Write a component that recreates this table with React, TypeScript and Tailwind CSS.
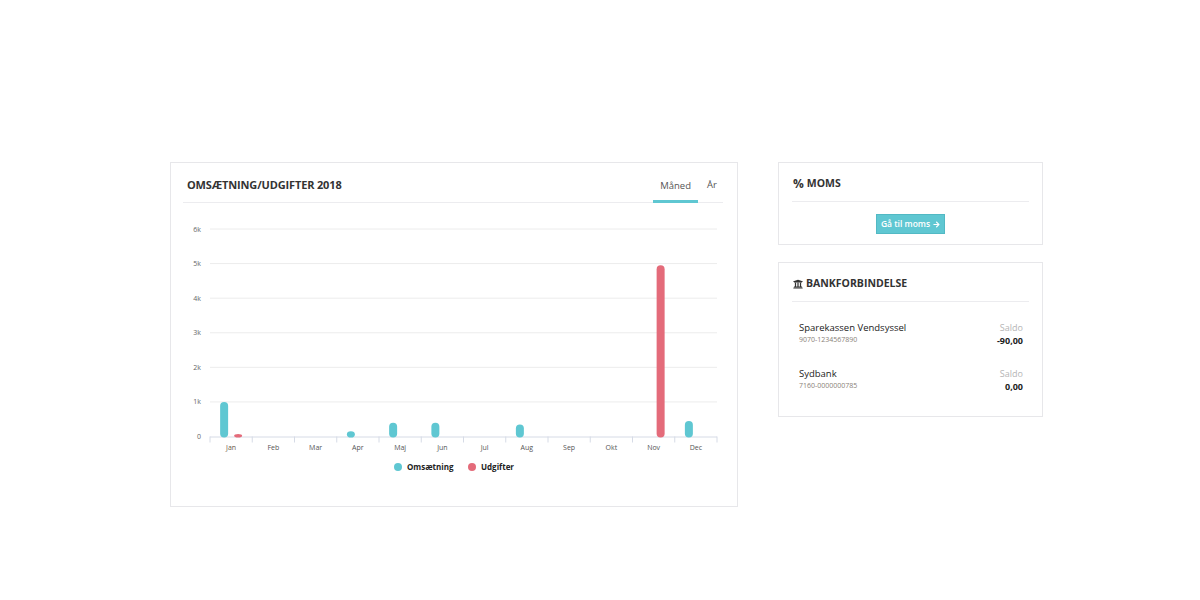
import React from 'react';
import { FaUniversity, FaArrowRight } from 'react-icons/fa';

const months = ['Jan', 'Feb', 'Mar', 'Apr', 'Maj', 'Jun', 'Jul', 'Aug', 'Sep', 'Okt', 'Nov', 'Dec'];
const revenue = [1000, 0, 0, 150, 400, 400, 0, 350, 0, 0, 0, 450];
const expenses = [50, 0, 0, 0, 0, 0, 0, 0, 0, 0, 4950, 0];

const TEAL = '#5fc7d2';
const RED = '#e46b7a';

// chart coordinates are relative to the svg
const X0 = 27;
const X1 = 534;
const BASE = 233.5;
const PER_K = 34.58;
const CAT = (X1 - X0) / 12;

const Bar: React.FC<{ cx: number; value: number; color: string }> = ({ cx, value, color }) => {
  if (!value) return null;
  const h = Math.max((value / 1000) * PER_K, 2.5);
  return <rect x={cx - 4} y={BASE - h} width={8} height={h + 1} rx={4} fill={color} />;
};

const Chart: React.FC = () => (
  <svg width={540} height={280} className="block" style={{ fontFamily: '"Open Sans", sans-serif' }}>
    {[0, 1, 2, 3, 4, 5, 6].map((k) => {
      const y = BASE - k * PER_K;
      return (
        <g key={k}>
          {k > 0 && <line x1={X0} x2={X1} y1={y} y2={y} stroke="#ececec" strokeWidth={1} />}
          <text x={18} y={y + 2.5} fontSize={7} fill="#666" textAnchor="end">
            {k === 0 ? '0' : `${k}k`}
          </text>
        </g>
      );
    })}
    <line x1={X0} x2={X1} y1={BASE + 0.5} y2={BASE + 0.5} stroke="#d6dbe6" strokeWidth={1} />
    {months.map((m, i) => {
      const left = X0 + i * CAT;
      const cx = left + CAT / 2;
      return (
        <g key={m}>
          <line x1={left} x2={left} y1={BASE} y2={BASE + 6} stroke="#d6dbe6" strokeWidth={1} />
          {i === 11 && <line x1={X1} x2={X1} y1={BASE} y2={BASE + 6} stroke="#d6dbe6" strokeWidth={1} />}
          <text x={cx} y={BASE + 13} fontSize={7} fill={i === 0 ? '#6b5a4a' : '#555'} textAnchor="middle">
            {m}
          </text>
          <Bar cx={cx - 7} value={revenue[i]} color={TEAL} />
          <Bar cx={cx + 7} value={expenses[i]} color={RED} />
        </g>
      );
    })}
    <g fontSize={8} fontWeight={700} fill="#222">
      <circle cx={215} cy={264} r={4} fill={TEAL} />
      <text x={224} y={267}>Omsætning</text>
      <circle cx={289} cy={264} r={4} fill={RED} />
      <text x={298} y={267}>Udgifter</text>
    </g>
  </svg>
);

const App: React.FC = () => {
  const accounts = [
    { name: 'Sparekassen Vendsyssel', number: '9070-1234567890', saldo: '-90,00' },
    { name: 'Sydbank', number: '7160-0000000785', saldo: '0,00' },
  ];

  return (
    <div
      className="w-[1200px] h-[600px] bg-white flex items-start gap-[40px] pt-[162px] pl-[170px] text-[#333]"
      style={{ fontFamily: '"Open Sans", sans-serif' }}
    >
      {/* Revenue / expenses chart */}
      <div className="w-[568px] h-[345px] border border-[#e7e7ea] pl-[12px] pr-[14px]">
        <div className="h-[40px] flex items-end justify-between border-b border-[#ececef]">
          <h2 className="text-[11px] font-bold pl-[4px] pb-[12px] leading-none tracking-[-0.15px]">OMSÆTNING/UDGIFTER 2018</h2>
          <div className="flex items-end text-[9.5px] text-[#555] leading-none">
            <div className="w-[45px] text-center pb-[10px] border-b-[3px] border-[#5fc7d2] mb-[-1px]">Måned</div>
            <div className="pl-[9px] pr-[6px] pb-[13px]">År</div>
          </div>
        </div>
        <Chart />
      </div>

      {/* Right column */}
      <div className="w-[265px] flex flex-col gap-[17px]">
        <div className="h-[83px] border border-[#e7e7ea] px-[13px]">
          <div className="h-[39px] flex items-center border-b border-[#ececef] pl-[1px] pt-[3px]">
            <h3 className="text-[10.5px] font-bold leading-none flex items-center">
              <span className="text-[12px] mr-[3px]">%</span>
              <span>MOMS</span>
            </h3>
          </div>
          <div className="flex justify-center pt-[12px]">
            <button className="h-[20px] w-[69px] bg-[#5fc7d2] border border-[#52b9c4] text-white text-[8.5px] font-semibold flex items-center justify-center gap-[3px]">
              Gå til moms <FaArrowRight size={7} />
            </button>
          </div>
        </div>

        <div className="h-[155px] border border-[#e7e7ea] px-[13px]">
          <div className="h-[39px] flex items-center gap-[3px] border-b border-[#ececef] pl-[1px] pt-[3px]">
            <FaUniversity size={10} className="text-[#333]" />
            <h3 className="text-[10.5px] font-bold leading-none">BANKFORBINDELSE</h3>
          </div>
          <div className="flex flex-col gap-[20px] pt-[20px] pl-[7px] pr-[6px]">
            {accounts.map((a) => (
              <div key={a.number} className="flex justify-between">
                <div className="flex flex-col">
                  <span className="text-[9.5px] leading-[12px] text-[#222]">{a.name}</span>
                  <span className="text-[7px] leading-[12px] text-[#8a7f78]">{a.number}</span>
                </div>
                <div className="flex flex-col items-end">
                  <span className="text-[9px] leading-[12px] text-[#b5b5b5]">Saldo</span>
                  <span className="text-[9px] leading-[14px] font-bold text-[#222]">{a.saldo}</span>
                </div>
              </div>
            ))}
          </div>
        </div>
      </div>
    </div>
  );
};

export default App;
